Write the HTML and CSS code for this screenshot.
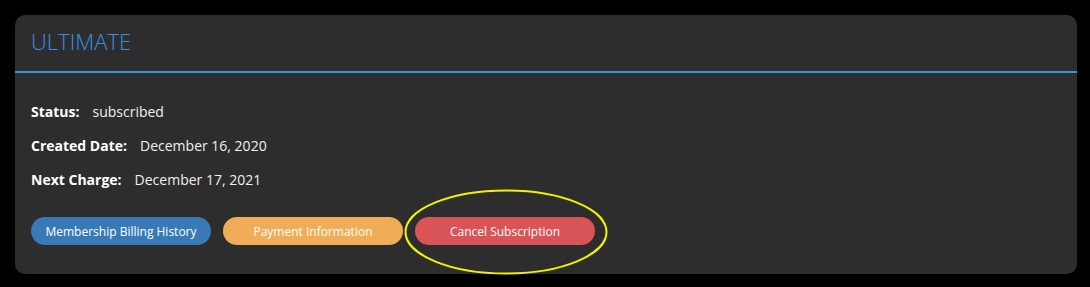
FILE: index.html
```html
<!DOCTYPE html>
<html>
<head>
<meta charset="utf-8">
<link rel="stylesheet" href="styles.css">
</head>
<body>
<div class="card">
  <div class="card-header">
    <h2 class="title">ULTIMATE</h2>
  </div>
  <div class="card-body">
    <div class="row"><span class="label">Status:</span><span class="value">subscribed</span></div>
    <div class="row"><span class="label">Created Date:</span><span class="value">December 16, 2020</span></div>
    <div class="row"><span class="label">Next Charge:</span><span class="value">December 17, 2021</span></div>
    <div class="actions">
      <button class="btn btn-blue">Membership Billing History</button>
      <button class="btn btn-orange">Payment Information</button>
      <div class="highlight-wrap">
        <button class="btn btn-red">Cancel Subscription</button>
        <svg class="highlight" width="204" height="86" viewBox="0 0 204 86">
          <ellipse cx="102" cy="43" rx="100.5" ry="41.5" fill="none" stroke="#f2f200" stroke-width="2"/>
        </svg>
      </div>
    </div>
  </div>
</div>
</body>
</html>
```

FILE: styles.css
```css
html, body {
  margin: 0;
  padding: 0;
  background: #000;
}
body {
  padding: 15px 13px 13px 15px;
  font-family: "Open Sans", "Liberation Sans", sans-serif;
}
.card {
  background: #2d2d2d;
  border-radius: 10px;
  width: 1062px;
  height: 259px;
  box-sizing: border-box;
}
.card-header {
  padding: 11px 16px 15px 16px;
  border-bottom: 2px solid #3d8fe8;
}
.title {
  margin: 0;
  font-size: 22px;
  line-height: 30px;
  font-weight: 300;
  color: #3a8fe6;
}
.card-body {
  padding: 29px 16px 0 16px;
}
.row {
  display: flex;
  gap: 13px;
  font-size: 14px;
  line-height: 20px;
  margin-bottom: 14px;
  color: #fff;
}
.label {
  font-weight: 700;
}
.value {
  color: #f0f0f0;
}
.actions {
  display: flex;
  gap: 12px;
  margin-top: 27px;
}
.btn {
  width: 180px;
  height: 28px;
  border: none;
  border-radius: 14px;
  font-family: "Open Sans", "Liberation Sans", sans-serif;
  font-size: 12px;
  color: #fff;
  padding: 0;
  cursor: pointer;
}
.btn-blue { background: #377ab5; }
.btn-orange { background: #eead56; }
.btn-red { background: #d95456; }
.highlight-wrap {
  position: relative;
}
.highlight {
  position: absolute;
  left: -11px;
  top: -28px;
  pointer-events: none;
}
```
